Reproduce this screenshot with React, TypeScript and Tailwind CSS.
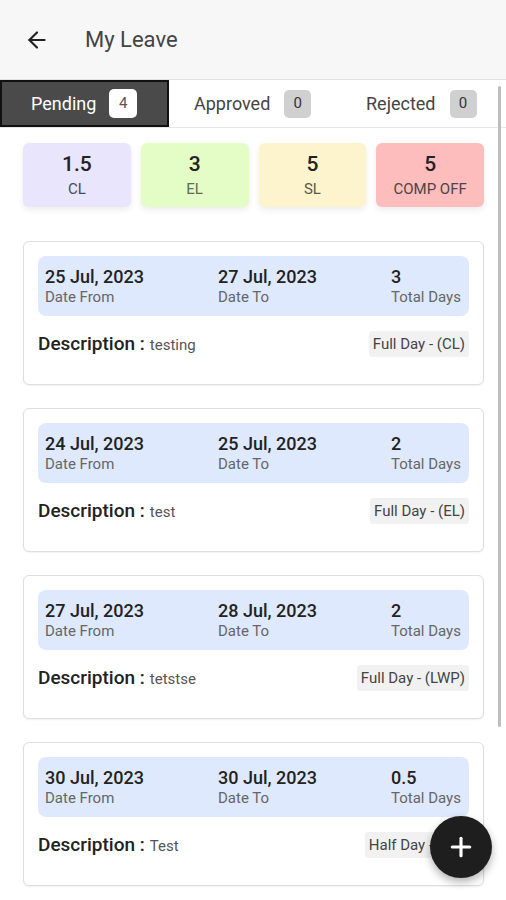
import { ArrowLeft, Plus } from 'lucide-react'

type Leave = {
  from: string
  to: string
  days: string
  desc: string
  kind: string
}

const leaves: Leave[] = [
  { from: '25 Jul, 2023', to: '27 Jul, 2023', days: '3', desc: 'testing', kind: 'Full Day - (CL)' },
  { from: '24 Jul, 2023', to: '25 Jul, 2023', days: '2', desc: 'test', kind: 'Full Day - (EL)' },
  { from: '27 Jul, 2023', to: '28 Jul, 2023', days: '2', desc: 'tetstse', kind: 'Full Day - (LWP)' },
  { from: '30 Jul, 2023', to: '30 Jul, 2023', days: '0.5', desc: 'Test', kind: 'Half Day - (CL)' },
]

const balances = [
  { value: '1.5', label: 'CL', bg: 'bg-[#e9e5fc]', text: 'text-[#4a4a55]' },
  { value: '3', label: 'EL', bg: 'bg-[#e4fcc6]', text: 'text-[#5d6f52]' },
  { value: '5', label: 'SL', bg: 'bg-[#fdf3cd]', text: 'text-[#5a5750]' },
  { value: '5', label: 'COMP OFF', bg: 'bg-[#fdbdbd]', text: 'text-[#4d4444]' },
]

function LeaveCard({ leave }: { leave: Leave }) {
  return (
    <div className="h-[144px] rounded-md border border-[#dedede] bg-white px-[14px] pt-[14px] shadow-[0_1px_2px_rgba(0,0,0,0.06)]">
      <div className="grid h-[60px] grid-cols-[173px_173px_1fr] items-center rounded-lg bg-[#dfe9fd] px-[7px]">
        <div>
          <div className="text-[18px] font-medium leading-[23px] text-[#222]">{leave.from}</div>
          <div className="text-[15px] leading-[19px] text-[#666]">Date From</div>
        </div>
        <div>
          <div className="text-[18px] font-medium leading-[23px] text-[#222]">{leave.to}</div>
          <div className="text-[15px] leading-[19px] text-[#666]">Date To</div>
        </div>
        <div>
          <div className="text-[18px] font-medium leading-[23px] text-[#222]">{leave.days}</div>
          <div className="whitespace-nowrap text-[15px] leading-[19px] text-[#666]">Total Days</div>
        </div>
      </div>
      <div className="mt-[14px] flex items-center justify-between">
        <div className="flex items-baseline">
          <span className="text-[19px] font-medium text-[#222]">Description :</span>
          <span className="ml-[5px] text-[15px] text-[#555]">{leave.desc}</span>
        </div>
        <span className="flex h-[26px] items-center rounded-[3px] bg-[#f1f1f1] px-[4px] text-[15px] text-[#444]">
          {leave.kind}
        </span>
      </div>
    </div>
  )
}

export default function App() {
  return (
    <div className="relative h-[900px] w-[506px] overflow-hidden bg-white font-['Roboto',sans-serif]">
      {/* Header */}
      <div className="flex h-[80px] items-center border-b border-[#e2e2e2] bg-[#f7f7f7] px-[24px]">
        <ArrowLeft size={26} strokeWidth={2} className="text-[#222]" />
        <span className="ml-[35px] text-[22px] text-[#444]">My Leave</span>
      </div>

      {/* Tabs */}
      <div className="flex h-[48px] border-b border-[#e6e6e6]">
        <div className="flex w-[169px] items-center gap-[13px] border-2 border-[#111] bg-[#4a4a4a] pl-[29px]">
          <span className="text-[18px] text-white">Pending</span>
          <span className="flex h-[29px] w-[28px] items-center justify-center rounded-[5px] bg-white text-[15px] text-[#555]">4</span>
        </div>
        <div className="flex w-[170px] items-center gap-[14px] pl-[25px]">
          <span className="text-[18px] text-[#444]">Approved</span>
          <span className="flex h-[28px] w-[27px] items-center justify-center rounded-[5px] bg-[#d0d0d0] text-[15px] text-[#333]">0</span>
        </div>
        <div className="flex flex-1 items-center gap-[14px] pl-[27px]">
          <span className="text-[18px] text-[#444]">Rejected</span>
          <span className="flex h-[28px] w-[27px] items-center justify-center rounded-[5px] bg-[#d0d0d0] text-[15px] text-[#333]">0</span>
        </div>
      </div>

      {/* Content */}
      <div className="pl-[23px] pr-[22px]">
        <div className="mt-[15px] grid grid-cols-4 gap-[10px]">
          {balances.map(b => (
            <div
              key={b.label}
              className={`flex h-[64px] flex-col items-center justify-center rounded-md shadow-[0_3px_6px_rgba(0,0,0,0.08)] ${b.bg}`}
            >
              <span className="text-[21px] font-medium leading-[25px] text-[#222]">{b.value}</span>
              <span className={`mt-[4px] text-[15px] leading-[17px] ${b.text}`}>{b.label}</span>
            </div>
          ))}
        </div>

        <div className="mt-[34px] flex flex-col gap-[23px]">
          {leaves.map((l, i) => (
            <LeaveCard key={i} leave={l} />
          ))}
        </div>
      </div>

      {/* Scroll indicator */}
      <div className="absolute right-[5px] top-[86px] h-[641px] w-[3px] rounded-full bg-[#bdbdbd]" />

      {/* FAB */}
      <button className="absolute bottom-[22px] right-[14px] flex h-[62px] w-[62px] items-center justify-center rounded-full bg-[#1e1e1e] shadow-[0_4px_8px_rgba(0,0,0,0.3)]">
        <Plus size={30} strokeWidth={2.5} className="text-white" />
      </button>
    </div>
  )
}
